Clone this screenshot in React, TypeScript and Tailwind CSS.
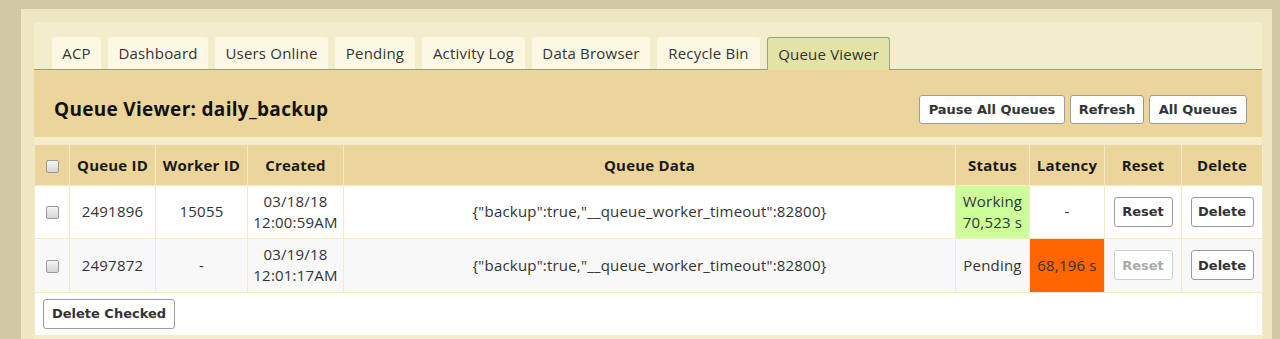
import React from "react";

const tabs: [string, number][] = [
  ["ACP", 49],
  ["Dashboard", 100],
  ["Users Online", 113],
  ["Pending", 80],
  ["Activity Log", 103],
  ["Data Browser", 118],
  ["Recycle Bin", 103],
  ["Queue Viewer", 123],
];

function Check() {
  return (
    <span className="inline-block w-[13px] h-[13px] rounded-[2px] border border-[#9a9a9a] bg-gradient-to-b from-[#f4f4f4] to-[#d6d6d6] align-middle" />
  );
}

function Btn({ children, disabled = false, className = "" }: { children: React.ReactNode; disabled?: boolean; className?: string }) {
  return (
    <button
      className={
        "inline-flex items-center justify-center rounded-[3px] border bg-white font-bold text-[13px] tracking-normal [font-family:'DejaVu_Sans',sans-serif] " +
        (disabled ? "border-[#cfcfcf] text-[#aaaaaa] " : "border-[#9c9c9c] text-[#333333] ") +
        className
      }
    >
      {children}
    </button>
  );
}

export default function App() {
  const td = "border border-[#f4eac6] text-center align-middle";
  return (
    <div className="w-[1280px] h-[339px] overflow-hidden bg-[#d2c8a5] pl-[21px] pt-[9px] [font-family:'Open_Sans',sans-serif] text-[#333333]">
      <div className="w-[1251px] h-[400px] bg-[#efe7c4] pl-[13px] pt-[13px]">
        <div className="w-[1228px] h-[400px] bg-[#f3edcc]">
          {/* tabs */}
          <div className="flex gap-[7px] pl-[18px] pt-[15px] border-b border-[#4fb2cf] h-[48px]">
            {tabs.map(([t, w]) =>
              t === "Queue Viewer" ? (
                <div
                  key={t}
                  style={{ width: w }}
                  className="h-[33px] flex items-center justify-center text-[15px] tracking-[0.2px] text-[#333] bg-[#e3e3a7] border border-b-0 border-[#5ab5cf] rounded-t-[3px] -mb-px relative z-10"
                >
                  {t}
                </div>
              ) : (
                <div
                  key={t}
                  style={{ width: w }}
                  className="h-[32px] flex items-center justify-center text-[15px] tracking-[0.2px] text-[#333] bg-[#fdf8e4] rounded-t-[3px]"
                >
                  {t}
                </div>
              )
            )}
          </div>
          {/* header band */}
          <div className="h-[67px] bg-[#ecd59b] flex items-center justify-between pl-[20px] pr-[15px] pt-[12px]">
            <div className="text-[19px] tracking-[0.3px] font-bold text-[#111]">Queue Viewer: daily_backup</div>
            <div className="flex gap-[5px]">
              <Btn className="h-[29px] w-[146px]">Pause All Queues</Btn>
              <Btn className="h-[29px] w-[74px]">Refresh</Btn>
              <Btn className="h-[29px] w-[98px]">All Queues</Btn>
            </div>
          </div>
          <div className="h-[8px]" />
          <table className="w-[1228px] border-collapse table-fixed text-[15px] tracking-[0.2px]">
            <colgroup>
              <col className="w-[35px]" />
              <col className="w-[86px]" />
              <col className="w-[92px]" />
              <col className="w-[96px]" />
              <col className="w-[612px]" />
              <col className="w-[74px]" />
              <col className="w-[75px]" />
              <col className="w-[77px]" />
              <col className="w-[81px]" />
            </colgroup>
            <thead>
              <tr className="bg-[#ecd59b] h-[40px] text-[#1a1a1a] font-bold">
                <th className={td + " border-t-0"}><Check /></th>
                <th className={td + " border-t-0"}>Queue ID</th>
                <th className={td + " border-t-0"}>Worker ID</th>
                <th className={td + " border-t-0"}>Created</th>
                <th className={td + " border-t-0"}>Queue Data</th>
                <th className={td + " border-t-0"}>Status</th>
                <th className={td + " border-t-0"}>Latency</th>
                <th className={td + " border-t-0"}>Reset</th>
                <th className={td + " border-t-0"}>Delete</th>
              </tr>
            </thead>
            <tbody className="leading-[21px]">
              <tr className="bg-white h-[53px]">
                <td className={td}><Check /></td>
                <td className={td}>2491896</td>
                <td className={td}>15055</td>
                <td className={td}>03/18/18<br />12:00:59AM</td>
                <td className={td}>{'{"backup":true,"__queue_worker_timeout":82800}'}</td>
                <td className={td + " bg-[#ccff99]"}>Working<br />70,523 s</td>
                <td className={td}>-</td>
                <td className={td}><Btn className="h-[30px] w-[59px]">Reset</Btn></td>
                <td className={td}><Btn className="h-[30px] w-[63px]">Delete</Btn></td>
              </tr>
              <tr className="bg-[#f8f8f8] h-[54px]">
                <td className={td}><Check /></td>
                <td className={td}>2497872</td>
                <td className={td}>-</td>
                <td className={td}>03/19/18<br />12:01:17AM</td>
                <td className={td}>{'{"backup":true,"__queue_worker_timeout":82800}'}</td>
                <td className={td}>Pending</td>
                <td className={td + " bg-[#ff6600]"}>68,196 s</td>
                <td className={td}><Btn disabled className="h-[30px] w-[59px]">Reset</Btn></td>
                <td className={td}><Btn className="h-[30px] w-[63px]">Delete</Btn></td>
              </tr>
              <tr className="bg-white h-[43px]">
                <td colSpan={9} className="border border-[#f4eac6] pl-[8px] align-middle">
                  <Btn className="h-[30px] w-[132px]">Delete Checked</Btn>
                </td>
              </tr>
            </tbody>
          </table>
        </div>
      </div>
    </div>
  );
}
